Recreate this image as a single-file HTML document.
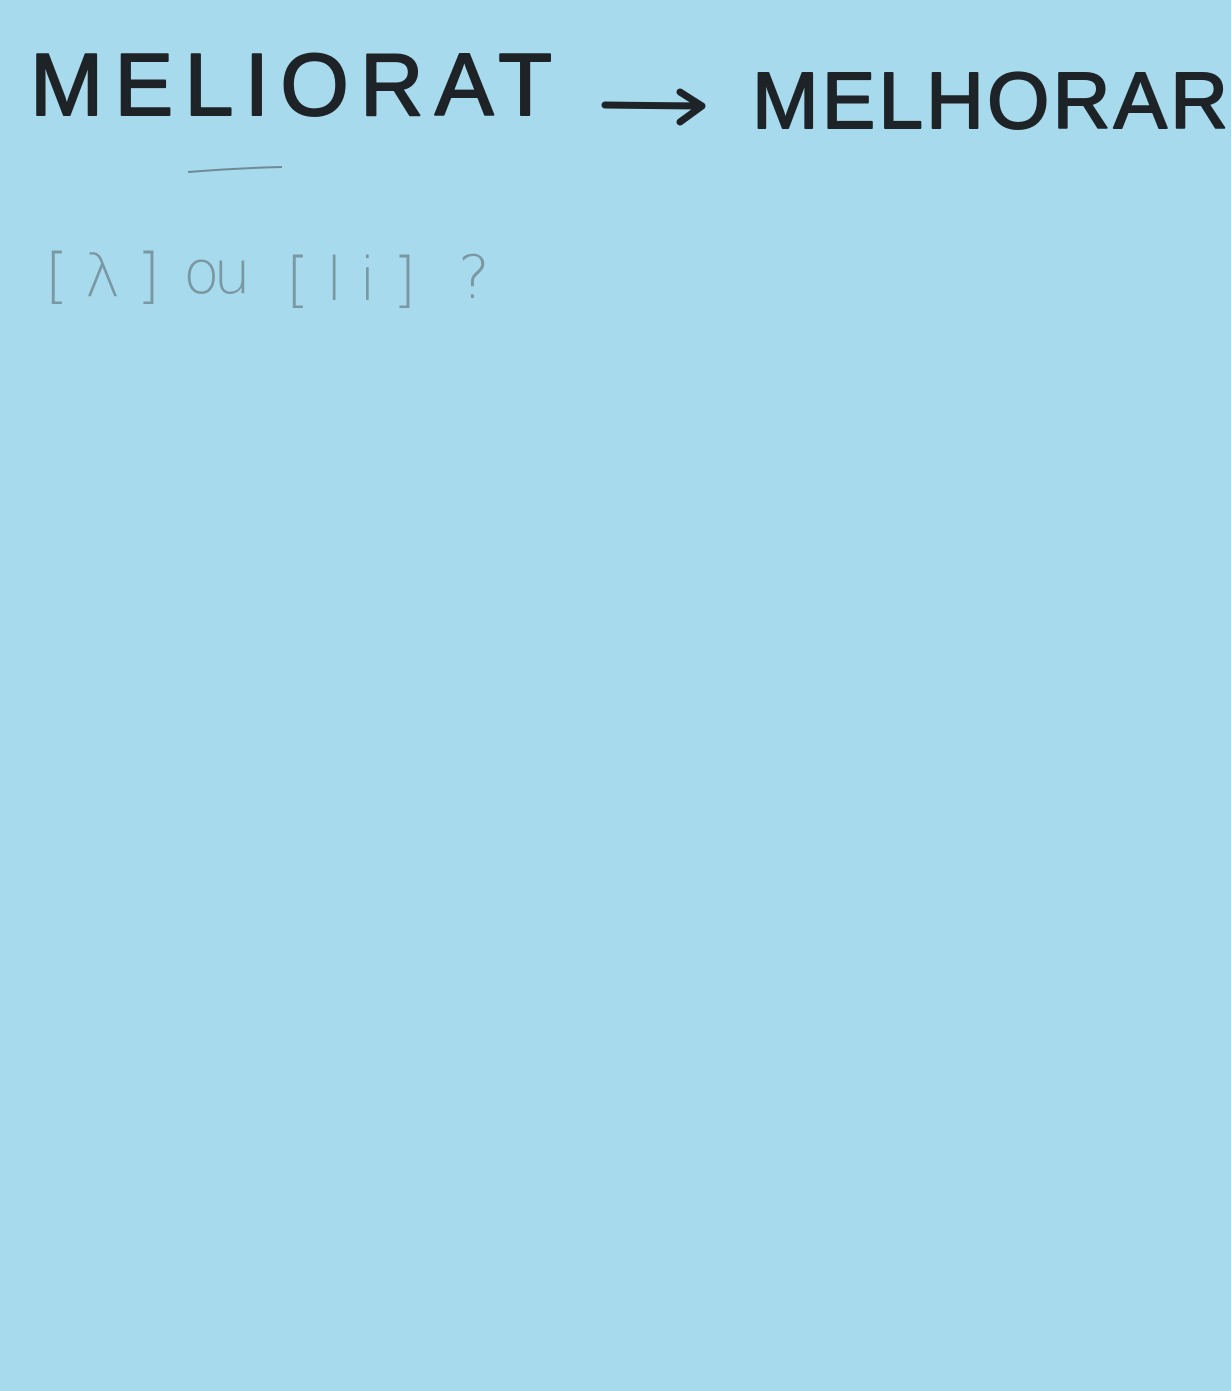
<!DOCTYPE html>
<html><head><meta charset="utf-8"><style>
html,body{margin:0;padding:0;background:#a8daed;}
svg{display:block}
</style></head><body>
<svg width="1231" height="1391" viewBox="0 0 1231 1391" xmlns="http://www.w3.org/2000/svg">
<rect width="1231" height="1391" fill="#a8daed"/>
<g font-family="Liberation Sans, sans-serif" fill="#1d2326" stroke="#1d2326" stroke-width="2" stroke-linejoin="round">
<text x="30" y="115" font-size="88" textLength="522" lengthAdjust="spacing">MELIORAT</text>
<text x="752" y="128" font-size="80" textLength="476" lengthAdjust="spacing">MELHORAR</text>
</g>
<g stroke="#1d2326" stroke-width="7" fill="none" stroke-linecap="round" stroke-linejoin="round">
<path d="M605 105 L700 106"/>
<path d="M680 92 L702 106 L680 122"/>
</g>
<path d="M188 172 Q235 168 282 167" stroke="#6e8a95" stroke-width="2" fill="none"/>
<g font-family="DejaVu Sans, sans-serif" font-weight="200" fill="#7a98a2" font-size="60">
<text x="45" y="296" textLength="115" lengthAdjust="spacing">[λ]</text>
<text x="183" y="293" textLength="68" lengthAdjust="spacing">ou</text>
<text x="286" y="300" textLength="130" lengthAdjust="spacing">[li]</text>
<text x="458" y="298">?</text>
</g>
</svg>
</body></html>
